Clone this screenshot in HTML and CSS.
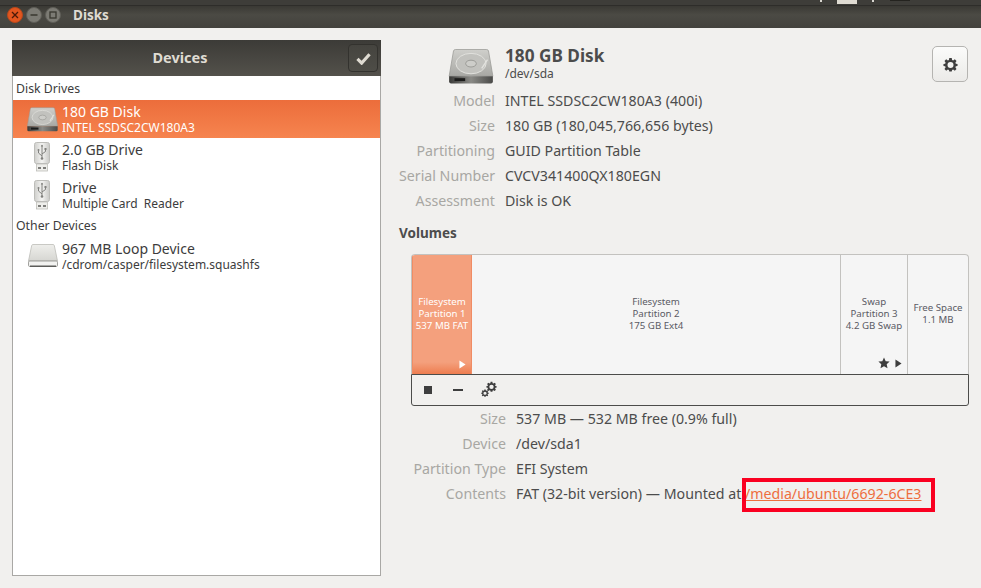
FILE: index.html
```html
<!DOCTYPE html>
<html lang="en">
<head>
<meta charset="utf-8">
<title>Disks</title>
<link rel="stylesheet" href="styles.css">
</head>
<body>
<svg class="defs" width="0" height="0" aria-hidden="true">
  <defs>
    <linearGradient id="diskTop" x1="0" y1="0" x2="0" y2="1"><stop offset="0" stop-color="#cfcfcb"/><stop offset="1" stop-color="#a8a8a4"/></linearGradient>
    <linearGradient id="diskFront" x1="0" y1="0" x2="1" y2="0"><stop offset="0" stop-color="#3a3a38"/><stop offset=".5" stop-color="#8a8a86"/><stop offset="1" stop-color="#4a4a48"/></linearGradient>
    <linearGradient id="usbBody" x1="0" y1="0" x2="1" y2="0"><stop offset="0" stop-color="#cfcfcc"/><stop offset=".5" stop-color="#f4f4f2"/><stop offset="1" stop-color="#c9c9c6"/></linearGradient>
    <linearGradient id="loopTop" x1="0" y1="0" x2="0" y2="1"><stop offset="0" stop-color="#eeeeeb"/><stop offset="1" stop-color="#d6d6d2"/></linearGradient>
    <symbol id="i-disk" viewBox="0 0 46 36">
      <path d="M7 0.500H39Q40.500 0.500 41 2L45.500 28H0.500L5 2Q5.500 0.500 7 0.500Z" fill="url(#diskTop)" stroke="#9b9b97" stroke-width=".8"/>
      <ellipse cx="23" cy="15" rx="15.500" ry="10.500" fill="#c2c2be" stroke="#e2e2de" stroke-width="1"/>
      <ellipse cx="23" cy="15" rx="5.500" ry="3.500" fill="#cdcdc9" stroke="#8f8f8b" stroke-width=".8"/>
      <path d="M34 20L40 11" stroke="#e2e2de" stroke-width="1.500"/>
      <path d="M0.500 28H45.500V33.500Q45.500 35.500 43.500 35.500H2.500Q0.500 35.500 0.500 33.500Z" fill="url(#diskFront)"/>
      <rect x="6" y="30" width="11" height="3" fill="#1c1c1b"/>
    </symbol>
    <symbol id="i-usb" viewBox="0 0 16 30">
      <rect x="0.500" y="0.500" width="15" height="21" rx="2" fill="url(#usbBody)" stroke="#bdbdb9"/>
      <rect x="2.500" y="22" width="11" height="7" fill="#eeeeeb" stroke="#bdbdb9" stroke-width=".8"/>
      <rect x="4" y="25" width="3" height="2" fill="#7e7e7b"/><rect x="9" y="25" width="3" height="2" fill="#7e7e7b"/>
      <path d="M8 3V17M8 14L4.500 11V8.500M8 12L11.500 9.500V7.500" fill="none" stroke="#80807d" stroke-width="1"/>
      <path d="M6.800 4.500L8 2.500L9.200 4.500Z" fill="#80807d"/><circle cx="8" cy="16.500" r="1.300" fill="#80807d"/><circle cx="4.500" cy="8" r="1" fill="#80807d"/><rect x="10.500" y="6" width="2" height="2" fill="#80807d"/>
    </symbol>
    <symbol id="i-loop" viewBox="0 0 30 24">
      <path d="M5 0.500H25Q26 0.500 26.300 1.500L29.500 17H0.500L3.700 1.500Q4 0.500 5 0.500Z" fill="url(#loopTop)" stroke="#bcbcb8" stroke-width=".8"/>
      <rect x="0.500" y="17" width="29" height="5.500" rx="1.200" fill="#f2f2f0" stroke="#8a8a86" stroke-width=".8"/>
      <rect x="2" y="21.500" width="26" height="1.500" fill="#5d5d5a"/>
    </symbol>
    <symbol id="i-gear" viewBox="0 0 16 16">
      <path fill-rule="evenodd" d="M6.700 1H9.300L9.700 3.100 10.800 3.600 12.600 2.400 14.400 4.200 13.200 6 13.700 7.100 15.500 7.500V9.500L13.700 9.900 13.200 11 14.400 12.800 12.600 14.600 10.800 13.400 9.700 13.900 9.300 15.500H6.700L6.300 13.900 5.200 13.400 3.400 14.600 1.600 12.800 2.800 11 2.300 9.900 0.500 9.500V7.500L2.300 7.100 2.800 6 1.600 4.200 3.400 2.400 5.200 3.600 6.300 3.100ZM8 5.300A3.200 3.200 0 1 0 8 11.700 3.200 3.200 0 1 0 8 5.300Z"/>
    </symbol>
  </defs>
</svg>

<div class="panel">
  <span class="panel-tick"></span>
  <span class="panel-block"></span>
  <span class="panel-tick"></span>
  <span class="panel-dark"></span>
</div>

<header class="titlebar">
  <div class="win-buttons">
    <span class="win-btn close">
      <svg viewBox="0 0 8 8" width="8" height="8"><path d="M1 1L7 7M7 1L1 7" stroke="#4a1a08" stroke-width="1.300"/></svg>
    </span>
    <span class="win-btn">
      <svg viewBox="0 0 8 8" width="8" height="8"><path d="M0.500 4H7.500" stroke="#38372f" stroke-width="1.500"/></svg>
    </span>
    <span class="win-btn">
      <svg viewBox="0 0 8 8" width="8" height="8"><rect x="1" y="1" width="6" height="6" fill="none" stroke="#38372f" stroke-width="1.300"/></svg>
    </span>
  </div>
  <span class="win-title">Disks</span>
</header>

<div class="window">
  <aside class="sidebar">
    <div class="side-head">
      <span class="side-title">Devices</span>
      <button class="check-btn" type="button" aria-label="Select">
        <svg viewBox="0 0 16 14" width="15" height="13"><path d="M1.500 7.500L6 12L14.500 2.500" fill="none" stroke="#dfdbd2" stroke-width="3.400"/></svg>
      </button>
    </div>
    <div class="dev-list">
      <div class="group">Disk Drives</div>
      <div class="device selected">
        <svg class="dev-icon disk-small"><use href="#i-disk"/></svg>
        <div class="dev-text"><div class="dev-name">180 GB Disk</div><div class="dev-sub">INTEL SSDSC2CW180A3</div></div>
      </div>
      <div class="device">
        <svg class="dev-icon usb"><use href="#i-usb"/></svg>
        <div class="dev-text"><div class="dev-name">2.0 GB Drive</div><div class="dev-sub">Flash Disk</div></div>
      </div>
      <div class="device">
        <svg class="dev-icon usb"><use href="#i-usb"/></svg>
        <div class="dev-text"><div class="dev-name">Drive</div><div class="dev-sub">Multiple Card&nbsp; Reader</div></div>
      </div>
      <div class="group">Other Devices</div>
      <div class="device">
        <svg class="dev-icon loop"><use href="#i-loop"/></svg>
        <div class="dev-text"><div class="dev-name">967 MB Loop Device</div><div class="dev-sub">/cdrom/casper/filesystem.squashfs</div></div>
      </div>
    </div>
  </aside>

  <main class="detail">
    <div class="disk-head">
      <svg class="disk-large"><use href="#i-disk"/></svg>
      <div class="disk-heading">
        <div class="disk-title">180 GB Disk</div>
        <div class="disk-path">/dev/sda</div>
      </div>
      <button class="gear-btn" type="button" aria-label="Settings">
        <svg class="gear-icon"><use href="#i-gear"/></svg>
      </button>
    </div>

    <dl class="props">
      <dt>Model</dt><dd>INTEL SSDSC2CW180A3 (400i)</dd>
      <dt>Size</dt><dd>180 GB (180,045,766,656 bytes)</dd>
      <dt>Partitioning</dt><dd>GUID Partition Table</dd>
      <dt>Serial Number</dt><dd>CVCV341400QX180EGN</dd>
      <dt>Assessment</dt><dd>Disk is OK</dd>
    </dl>

    <h2 class="volumes">Volumes</h2>

    <div class="vol-box">
      <div class="vol-bar">
        <div class="part part-1 active">Filesystem<br>Partition 1<br>537 MB FAT
          <div class="part-marks"><svg viewBox="0 0 8 10" width="7" height="9"><path d="M0.500 0.500L7.500 5L0.500 9.500Z"/></svg></div>
        </div>
        <div class="part part-2">Filesystem<br>Partition 2<br>175 GB Ext4</div>
        <div class="part part-3">Swap<br>Partition 3<br>4.2 GB Swap
          <div class="part-marks"><svg viewBox="0 0 12 12" width="12" height="12"><path d="M6 0.500L7.700 4.200 11.600 4.600 8.700 7.300 9.500 11.300 6 9.300 2.500 11.300 3.300 7.300 0.400 4.600 4.300 4.200Z"/></svg><svg viewBox="0 0 8 10" width="7" height="9"><path d="M0.500 0.500L7.500 5L0.500 9.500Z"/></svg></div>
        </div>
        <div class="part part-4">Free Space<br>1.1 MB</div>
      </div>
      <div class="vol-tools">
        <span class="tool-stop"></span>
        <span class="tool-minus"></span>
        <svg class="tool-gears" viewBox="0 0 16 16" width="16" height="16"><use href="#i-gear" x="5" y="0" width="11" height="11"/><use href="#i-gear" x="0" y="8" width="8" height="8"/></svg>
      </div>
    </div>

    <dl class="props props-sub">
      <dt>Size</dt><dd>537 MB — 532 MB free (0.9% full)</dd>
      <dt>Device</dt><dd>/dev/sda1</dd>
      <dt>Partition Type</dt><dd>EFI System</dd>
      <dt>Contents</dt><dd>FAT (32-bit version) — Mounted at <a class="mount" href="#">/media/ubuntu/6692-6CE3</a></dd>
    </dl>
    <div class="highlight"></div>
  </main>
</div>
</body>
</html>
```

FILE: styles.css
```css
* { box-sizing: border-box; }
html, body { margin: 0; height: 100%; }
body {
  width: 981px;
  height: 588px;
  overflow: hidden;
  background: #f1f0ee;
  color: #4c4c4c;
  font-family: "Noto Sans", "Open Sans", sans-serif;
  font-size: 14.2px;
  position: relative;
}
.defs { position: absolute; }

.panel {
  height: 6px;
  background: #3e3d39;
  display: flex;
  justify-content: flex-end;
  align-items: flex-start;
  padding-right: 71px;
  gap: 16px;
  border-bottom: 1px solid #2e2d2a;
}
.panel-tick { width: 2px; height: 2px; background: #d8d6d0; }
.panel-block { width: 20px; height: 4px; background: #dfdbd2; margin: 0 -1px; }
.panel-dark { width: 20px; height: 1px; background: #24231f; }

.titlebar {
  height: 22px;
  background: linear-gradient(#3a3934, #4b4a44 40%, #43423d);
  display: flex;
  align-items: center;
  padding-left: 7px;
  margin-bottom: 12px;
}
.win-buttons { display: flex; gap: 3px; margin-top: -4px; }
.win-btn {
  width: 16px;
  height: 16px;
  border-radius: 50%;
  background: #7c7b74;
  border: 1px solid #5f5e58;
  display: flex;
  align-items: center;
  justify-content: center;
}
.win-btn.close { background: #e2561f; border-color: #b8481c; }
.win-title {
  margin-left: 12px;
  margin-top: -4px;
  color: #dfdbd2;
  font-size: 13.5px;
  font-weight: 700;
}

.window {
  display: flex;
  padding-left: 12px;
}
.sidebar { width: 369px; height: 536px; display: flex; flex-direction: column; flex: none; }
.side-head {
  height: 36px;
  background: linear-gradient(#3c3b37, #53514b);
  position: relative;
  display: flex;
  align-items: center;
  justify-content: center;
  padding-right: 33px;
  flex: none;
}
.side-title { color: #dfdbd2; font-weight: 700; font-size: 14.5px; margin-top: -2px; }
.check-btn {
  position: absolute;
  right: 3px;
  top: 4px;
  width: 30px;
  height: 28px;
  padding: 0;
  background: linear-gradient(#45443f, #4e4d47);
  border: 1px solid #33322e;
  border-radius: 4px;
  display: flex;
  align-items: center;
  justify-content: center;
}
.dev-list {
  flex: 1;
  background: #fff;
  border: 1px solid #a9a8a5;
  border-top: 0;
  padding-top: 1px;
}
.group { height: 23px; line-height: 23px; padding-left: 3px; font-size: 12.3px; color: #3c3c3c; }
.device { height: 38px; display: flex; align-items: center; color: #3c3c3c; }
.device.selected { background: linear-gradient(#ec6d3b, #f6844f); color: #fff; }
.dev-icon { flex: none; display: block; }
.disk-small { width: 31px; height: 25px; margin: 1px 4px 0 14px; }
.usb { width: 16px; height: 30px; margin: 0 12px 0 21px; }
.loop { width: 30px; height: 24px; margin: 0 4px 0 15px; }
.dev-text { display: flex; flex-direction: column; }
.dev-name { font-size: 14px; line-height: 15px; }
.dev-sub { font-size: 12px; line-height: 14px; margin-top: 2px; }

.detail { flex: 1; position: relative; padding-left: 18px; min-width: 0; }
.disk-head { height: 48px; display: flex; align-items: flex-start; padding-top: 6px; position: relative; }
.disk-large { width: 46px; height: 35px; margin: 3px 11px 0 49px; flex: none; }
.disk-heading { display: flex; flex-direction: column; }
.disk-title { font-size: 17.2px; font-weight: 700; line-height: 19px; }
.disk-path { font-size: 12px; line-height: 16px; margin-top: 1px; }
.gear-btn {
  position: absolute;
  right: 13px;
  top: 6px;
  width: 36px;
  height: 36px;
  padding: 0;
  background: linear-gradient(#fbfbfa, #ebeae8);
  border: 1px solid #b5b4b1;
  border-radius: 5px;
  display: flex;
  align-items: center;
  justify-content: center;
}
.gear-icon { width: 15px; height: 15px; fill: #3e3e3e; }

.props {
  display: grid;
  grid-template-columns: 96px auto;
  column-gap: 10px;
  grid-auto-rows: 25px;
  margin: 0;
  align-items: center;
  line-height: 25px;
}
.props dt { text-align: right; color: #a8a7a3; white-space: nowrap; }
.props dd { margin: 0; color: #4c4c4c; white-space: nowrap; }

.volumes { margin: 8px 0 0; height: 25px; line-height: 25px; font-size: 13.5px; font-weight: 700; color: #4c4c4c; }

.vol-box { margin: 8px 12px 0 12px; width: 558px; }
.vol-bar {
  height: 120px;
  display: flex;
  border: 1px solid #c3c2bf;
  border-bottom: 0;
  border-radius: 4px 4px 0 0;
  background: #f5f5f5;
  overflow: hidden;
}
.part {
  position: relative;
  display: block;
  text-align: center;
  font-size: 9.7px;
  line-height: 12px;
  color: #5a5a64;
  border-right: 1px solid #c3c2bf;
  padding-top: 41px;
  flex: none;
  white-space: nowrap;
}
.part-1 { width: 60px; border-right: 0; }
.part-2 { width: 369px; }
.part-3 { width: 67px; }
.part-4 { width: 60px; border-right: 0; padding-top: 47px; }
.part.active {
  background: linear-gradient(#f4a07d 90%, #ee7d50);
  box-shadow: inset -1px 0 #f08c64, inset 1px 0 #f08c64;
  color: #fff;
}
.part-marks {
  position: absolute;
  right: 5px;
  bottom: 5px;
  display: flex;
  align-items: center;
  gap: 5px;
}
.part-marks svg { fill: #3e3e3e; display: block; }
.active .part-marks { right: 6px; }
.active .part-marks svg { fill: #fff; }
.vol-tools {
  height: 32px;
  border: 1px solid #4c4c4a;
  border-radius: 0 0 3px 3px;
  background: #f1f0ee;
  display: flex;
  align-items: center;
  padding-left: 12px;
  gap: 15px;
}
.tool-stop { width: 8px; height: 8px; background: #3e3e3e; }
.tool-minus { width: 10px; height: 2px; background: #3e3e3e; margin-left: 6px; }
.tool-gears { fill: #3e3e3e; margin-left: 3px; margin-top: -3px; }

.props-sub { margin: 0 0 0 12px; grid-template-columns: 95px auto; }
.mount { color: #ee6e3e; text-decoration: underline; }
.highlight {
  position: absolute;
  left: 361px;
  top: 438px;
  width: 193px;
  height: 34px;
  border: 4px solid #fa0020;
}
```
